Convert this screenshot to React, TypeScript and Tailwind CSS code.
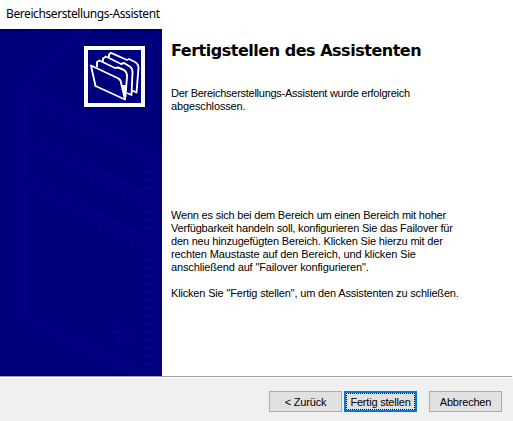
import type { ReactNode } from "react";

const BODY_FONT = "font-['Liberation_Sans',Arial,sans-serif] text-[11px] leading-[13px]";

function Watermark() {
  return (
    <svg width="162" height="347" viewBox="0 29 162 347" shapeRendering="crispEdges" className="block shrink-0">
      <defs>
        <pattern id="dither" width="2" height="2" patternUnits="userSpaceOnUse">
          <rect width="2" height="2" fill="#000000" />
          <rect x="0" y="0" width="1" height="1" fill="#000080" />
          <rect x="1" y="1" width="1" height="1" fill="#000080" />
        </pattern>
      </defs>
      <rect x="0" y="29" width="162" height="347" fill="url(#dither)" />
      {/* server tower outline */}
      <path d="M74 29H92L32 89L153 150L162 141V376H129L21 321L15 317V88Z" fill="#000080" />
      <path d="M92 29L32 89L153 150L162 141V29Z" fill="url(#dither)" />
      <g fill="url(#dither)">
        <path d="M27 102L148 162V193L27 133Z" />
        <path d="M27 148L148 208V237L27 177Z" />
        <path d="M27 192L148 252V371L27 310Z" />
      </g>
      <path d="M116 323L135 333V351L116 341Z" fill="#000080" />
      {/* folder emblem */}
      <rect x="84" y="46" width="61" height="61" fill="#ffffff" />
      <rect x="88" y="50" width="53" height="53" fill="url(#dither)" />
      <g fill="none" stroke="#ffffff" strokeWidth="1.9" strokeLinejoin="round" shapeRendering="auto">
        <path d="M91 65.500L118.500 78.500L120.500 80.500L125 99.500L95.500 86Z" />
        <path d="M97 67V62L99.500 60.500L115 68L118 67.500L124 70Q127 72 127 76L125.500 97" />
        <path d="M103 61.500V58.500L106 56.500L121 64L124 63L129 66Q132.500 68 132.500 72L131.500 95L127 93" />
        <path d="M109 57V54.500L111 52.800L127 60L129 59L135 62Q138.500 64 138.500 68L136.500 92.500L132 90.500" />
      </g>
      <path d="M121.500 85H126L125.500 99L124 98Z" fill="#ffffff" />
    </svg>
  );
}

function Button({ children, focused = false }: { children: ReactNode; focused?: boolean }) {
  return (
    <button
      className={`${BODY_FONT} flex h-[21px] w-[73px] items-stretch whitespace-nowrap bg-[#e1e1e1] tracking-[-0.2px] text-black ${
        focused ? "border-2 border-[#0078d7]" : "border border-[#adadad]"
      }`}
    >
      <span
        className={`flex grow items-center justify-center pt-px ${focused ? "border border-dotted border-black" : ""}`}
      >
        {children}
      </span>
    </button>
  );
}

export default function App() {
  return (
    <div className="flex h-[421px] w-[513px] flex-col overflow-hidden bg-white text-black">
      <header className="h-[29px] shrink-0 pl-[6px] pt-[5px] font-['Noto_Sans','Open_Sans',sans-serif] text-[12px] leading-[18px] tracking-[-0.41px]">
        <span>Bereichserstellungs-Assistent</span>
      </header>
      <main className="flex h-[347px] shrink-0">
        <Watermark />
        <section className={`${BODY_FONT} flex flex-col items-start whitespace-nowrap pl-[9px]`}>
          <h1 className="mt-[12px] font-['DejaVu_Sans',Verdana,sans-serif] text-[16px] font-bold leading-[20px] tracking-[-0.48px]">
            Fertigstellen des Assistenten
          </h1>
          <p className="mt-[26px] flex flex-col items-start">
            <span className="tracking-[-0.27px]">Der Bereichserstellungs-Assistent wurde erfolgreich</span>
            <span className="tracking-[-0.14px]">abgeschlossen.</span>
          </p>
          <p className="mt-[96px] flex flex-col items-start">
            <span className="tracking-[-0.2px]">Wenn es sich bei dem Bereich um einen Bereich mit hoher</span>
            <span className="tracking-[-0.2px]">Verfügbarkeit handeln soll, konfigurieren Sie das Failover für</span>
            <span className="tracking-[-0.19px]">den neu hinzugefügten Bereich. Klicken Sie hierzu mit der</span>
            <span className="tracking-[-0.12px]">rechten Maustaste auf den Bereich, und klicken Sie</span>
            <span className="tracking-[-0.14px]">anschließend auf "Failover konfigurieren".</span>
          </p>
          <p className="mt-[13px] tracking-[-0.17px]">
            <span>Klicken Sie "Fertig stellen", um den Assistenten zu schließen.</span>
          </p>
        </section>
      </main>
      <footer className="flex grow flex-col bg-[#f0f0f0]">
        <div className="mr-px h-px bg-[#a0a0a0]" />
        <div className="h-px bg-white" />
        <div className="flex justify-end pr-[11px] pt-[13px]">
          <Button>&lt; Zurück</Button>
          <div className="ml-[2px]"><Button focused>Fertig stellen</Button></div>
          <div className="ml-[12px]"><Button>Abbrechen</Button></div>
        </div>
      </footer>
    </div>
  );
}
